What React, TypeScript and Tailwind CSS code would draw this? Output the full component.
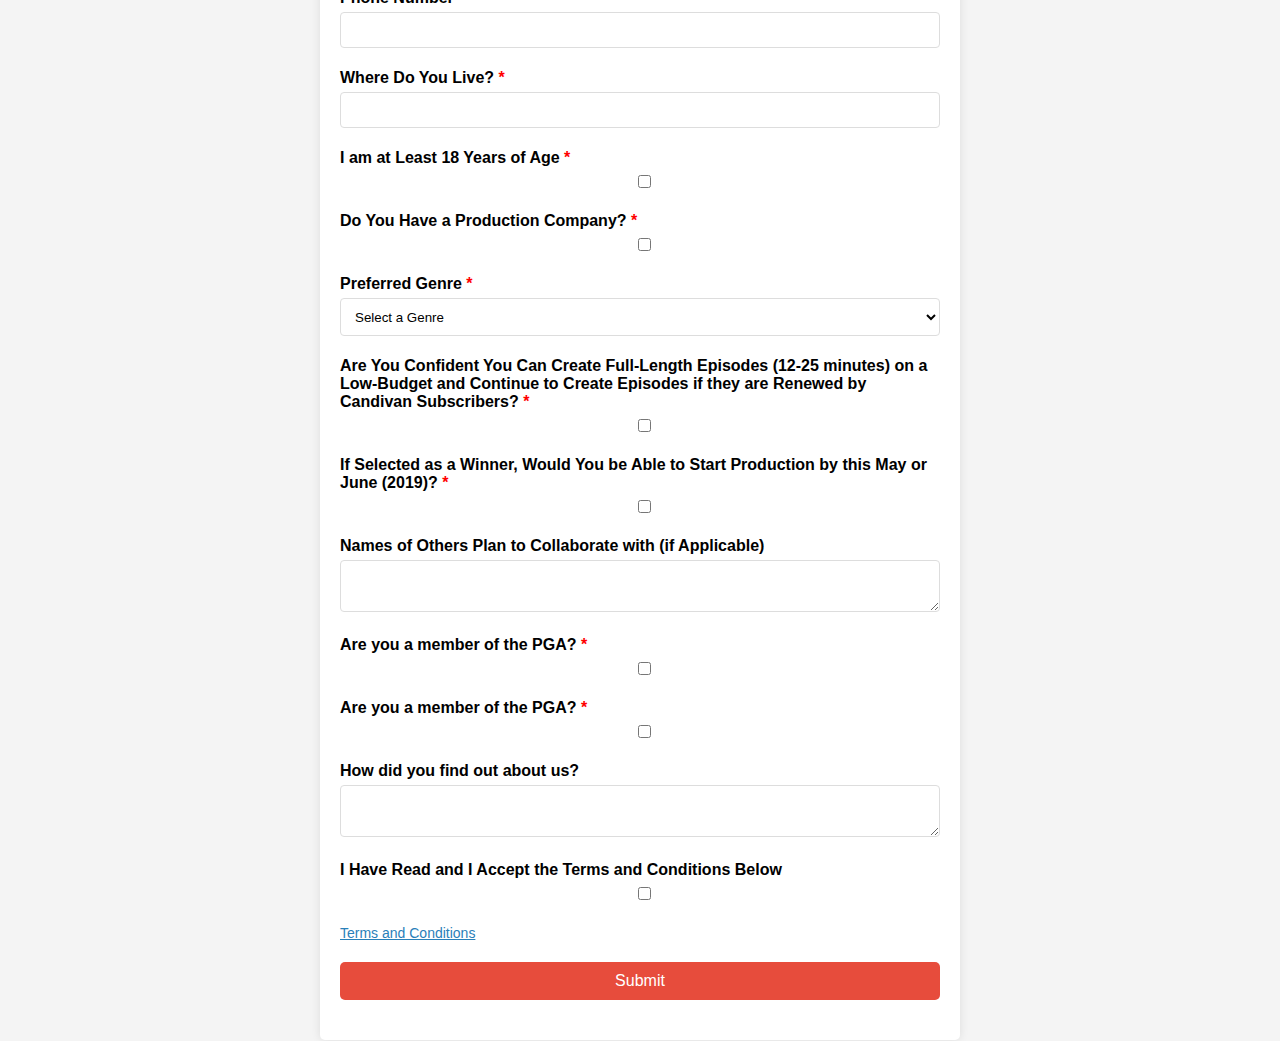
import React from "react";

const Req = () => <span className="text-[#ff0000]"> *</span>;

function Label({ children, req }: { children: React.ReactNode; req?: boolean }) {
  return (
    <label className="block font-bold text-[16px] leading-[18px] pt-[1px] mb-[5px] text-black">
      {children}
      {req && <Req />}
    </label>
  );
}

function TextField({ label, req }: { label: string; req?: boolean }) {
  return (
    <div className="mb-[20px]">
      <Label req={req}>{label}</Label>
      <input
        type="text"
        className="block w-full h-[36px] bg-white border border-[#dddddd] rounded-[4px] px-[10px] text-[13.33px] outline-none"
      />
    </div>
  );
}

function CheckField({ label, req }: { label: string; req?: boolean }) {
  return (
    <div className="mb-[20px]">
      <Label req={req}>{label}</Label>
      <div className="flex justify-center pl-[8px] py-[3px] h-[19px]">
        <input type="checkbox" className="w-[13px] h-[13px] m-0" />
      </div>
    </div>
  );
}

function AreaField({ label, req }: { label: string; req?: boolean }) {
  return (
    <div className="mb-[23px]">
      <Label req={req}>{label}</Label>
      <textarea className="block w-full h-[52px] bg-white border border-[#dddddd] rounded-[4px] px-[10px] py-[10px] text-[13.33px] outline-none" />
    </div>
  );
}

export default function App() {
  return (
    <div
      className="h-[1041px] overflow-hidden bg-[#f4f4f4] flex justify-center items-end"
      style={{ fontFamily: '"Liberation Sans", Arial, sans-serif' }}
    >
      <div className="w-[640px] mb-[1px] bg-white rounded-[5px] shadow-[0_0_10px_rgba(0,0,0,0.1)] px-[20px] pt-[20px] pb-[20px]">
        <form onSubmit={(e) => e.preventDefault()}>
          <TextField label="Full Name" req />
          <TextField label="Email Address" req />
          <TextField label="Phone Number" />
          <TextField label="Where Do You Live?" req />
          <CheckField label="I am at Least 18 Years of Age" req />
          <CheckField label="Do You Have a Production Company?" req />
          <div className="mb-[20px]">
            <Label req>Preferred Genre</Label>
            <select className="block w-full h-[38px] bg-white border border-[#dddddd] rounded-[4px] px-[10px] text-[13.33px] text-black outline-none">
              <option>Select a Genre</option>
              <option>Comedy</option>
              <option>Drama</option>
              <option>Horror</option>
              <option>Action</option>
            </select>
          </div>
          <CheckField
            label="Are You Confident You Can Create Full-Length Episodes (12-25 minutes) on a Low-Budget and Continue to Create Episodes if they are Renewed by Candivan Subscribers?"
            req
          />
          <CheckField
            label="If Selected as a Winner, Would You be Able to Start Production by this May or June (2019)?"
            req
          />
          <AreaField label="Names of Others Plan to Collaborate with (if Applicable)" />
          <CheckField label="Are you a member of the PGA?" req />
          <CheckField label="Are you a member of the PGA?" req />
          <AreaField label="How did you find out about us?" />
          <CheckField label="I Have Read and I Accept the Terms and Conditions Below" />
          <div className="h-[19px] leading-[19px] pt-[1px] mb-[20px] text-[14px]">
            <a href="#" className="text-[#2980b9] underline">
              Terms and Conditions
            </a>
          </div>
          <button
            type="submit"
            className="block w-full h-[38px] bg-[#e74c3c] text-white text-[16px] rounded-[5px] mb-[20px]"
          >
            Submit
          </button>
        </form>
      </div>
    </div>
  );
}
